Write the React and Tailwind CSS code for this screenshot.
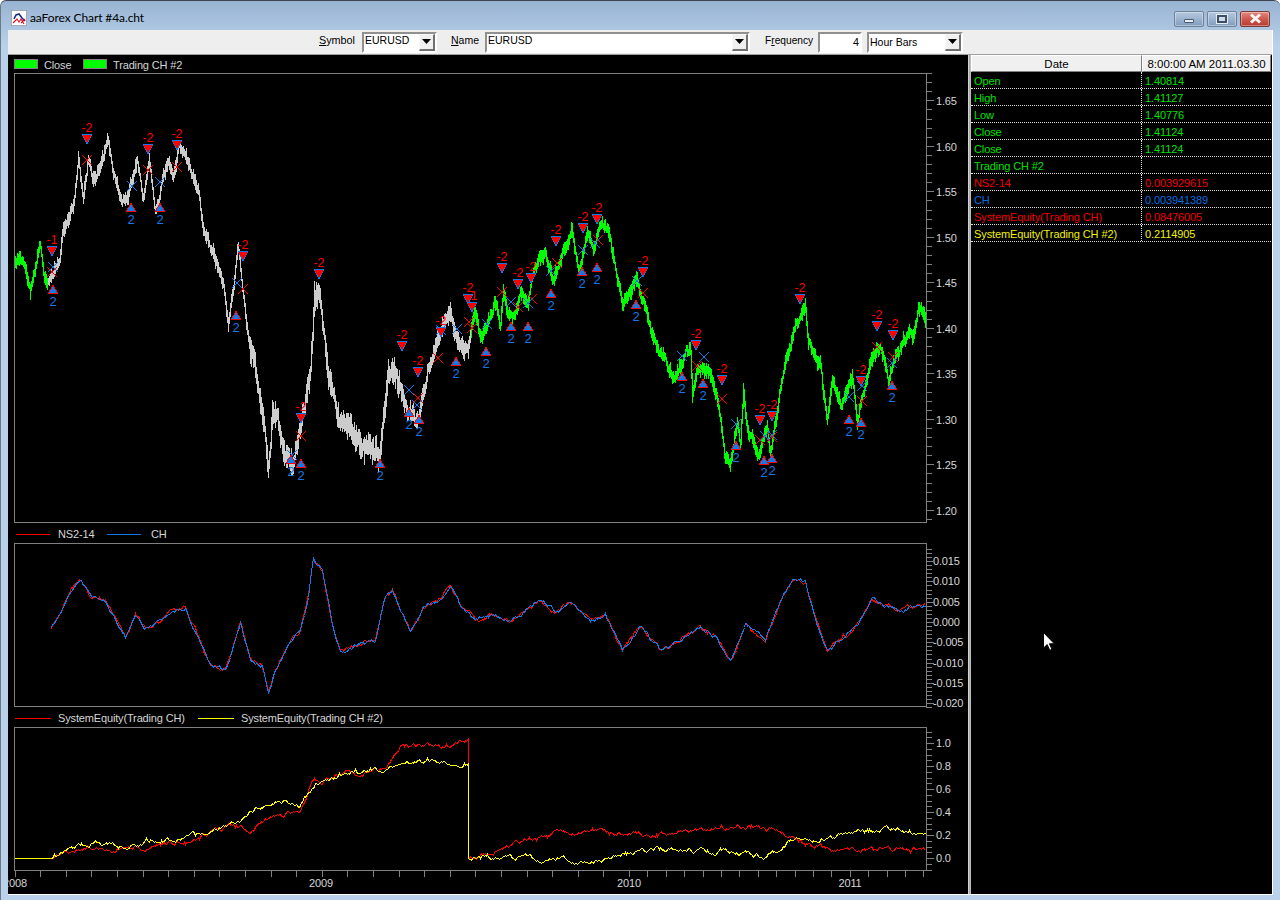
import React from "react";

function rng(seed) {
  let a = seed;
  return () => {
    a |= 0; a = (a + 0x6d2b79f5) | 0;
    let t = Math.imul(a ^ (a >>> 15), 1 | a);
    t = (t + Math.imul(t ^ (t >>> 7), 61 | t)) ^ t;
    return ((t ^ (t >>> 14)) >>> 0) / 4294967296;
  };
}
function interp(pts, x) {
  for (let i = 1; i < pts.length; i++) {
    if (x <= pts[i][0]) {
      const [a, b] = pts[i - 1], [c, d] = pts[i];
      return c === a ? d : b + ((d - b) * (x - a)) / (c - a);
    }
  }
  return pts[pts.length - 1][1];
}

const PRICE = [[14,262],[20,258],[25,268],[30,292],[35,265],[40,245],[44,275],[47,287],[53,273],[60,253],[63,227],[73,203],[78,157],[83,200],[88,160],[93,180],[108,147],[113,177],[122,203],[128,193],[137,163],[143,197],[149,163],[155,207],[168,157],[173,180],[179,147],[187,163],[198,193],[203,237],[213,253],[223,283],[228,327],[238,250],[247,327],[252,350],[262,400],[268,470],[272,420],[283,440],[292,465],[300,430],[310,380],[314,300],[320,300],[328,380],[340,420],[355,440],[372,458],[380,455],[388,370],[400,385],[410,410],[418,425],[428,370],[440,340],[450,300],[457,343],[463,347],[468,340],[475,317],[482,340],[495,303],[500,327],[503,290],[508,317],[515,320],[520,297],[528,307],[533,280],[545,253],[553,282],[562,250],[572,233],[578,263],[587,237],[593,253],[600,225],[607,228],[613,260],[623,307],[637,280],[645,300],[650,320],[658,350],[663,353],[675,377],[683,357],[690,348],[692,393],[697,368],[703,363],[712,380],[718,403],[725,457],[730,460],[737,420],[740,443],[743,390],[747,433],[757,455],[767,428],[770,450],[780,393],[790,347],[800,320],[805,305],[808,340],[820,367],[827,420],[832,383],[840,407],[852,382],[857,430],[863,390],[870,363],[880,347],[888,377],[903,340],[913,337],[918,308],[926,320]];

const CH = [[50,628],[60,612],[70,590],[80,580],[90,595],[105,600],[115,618],[125,635],[135,615],[145,628],[160,622],[170,610],[185,608],[195,630],[210,665],[225,670],[232,650],[240,622],[250,660],[262,665],[268,692],[275,670],[290,640],[300,630],[308,595],[313,558],[322,570],[332,625],[340,652],[355,645],[375,640],[385,595],[392,590],[400,610],[410,630],[425,605],[437,600],[450,585],[460,605],[475,620],[490,615],[510,620],[525,610],[540,600],[555,610],[570,603],[590,620],[605,615],[622,650],[640,625],[660,650],[680,640],[700,628],[715,635],[730,662],[745,625],[765,640],[780,600],[793,578],[805,582],[815,620],[827,652],[845,635],[860,620],[872,598],[885,605],[900,612],[915,605],[925,605]];

const YEL = [[14,858],[52,858],[70,848],[90,843],[120,845],[160,839],[200,835],[240,818],[260,805],[280,800],[300,803],[315,785],[340,775],[360,772],[385,768],[405,762],[425,760],[445,763],[468,763],[468.5,858],[500,857],[540,858],[590,860],[620,855],[660,848],[700,850],[740,852],[765,857],[790,842],[820,838],[850,832],[880,830],[900,828],[925,833]];
const RED = [[14,858],[52,858],[80,848],[110,848],[150,845],[190,842],[230,825],[250,830],[270,815],[300,810],[312,780],[340,775],[385,768],[400,747],[430,748],[445,745],[468,740],[468.5,858],[490,855],[510,843],[560,832],[600,830],[650,835],[700,830],[730,826],[770,828],[800,840],[830,848],[870,852],[900,849],[925,850]];

const SHORTS = [[52,251,"-1"],[87,139],[148,149],[177,145],[243,256],[319,274],[301,418],[402,346],[418,372],[441,332],[468,299],[472,307,"-1"],[502,268],[518,284],[531,278],[556,241],[583,228],[597,219],[643,272],[696,345],[722,380],[760,420],[772,416],[800,299],[861,381],[877,326],[893,335]];
const LONGS = [[53,290],[131,208],[160,208],[236,316],[291,460],[301,464],[380,464],[409,413],[419,420],[456,362],[486,352],[511,327],[528,327],[551,294],[582,272],[597,268],[636,305],[682,377],[703,384],[736,446],[764,461],[772,459],[849,420],[861,423],[892,386]];
const RX = [[52,272],[87,160],[148,170],[177,167],[243,289],[301,436],[418,398],[438,358],[469,322],[472,328],[502,292],[518,307],[532,299],[557,263],[583,250],[598,240],[643,293],[697,366],[722,399],[760,440],[772,437],[862,401],[877,347],[893,357]];
const BX = [[53,267],[132,186],[160,182],[237,283],[292,455],[409,390],[417,405],[441,330],[457,329],[487,324],[511,302],[528,303],[551,271],[583,250],[595,243],[637,281],[682,356],[704,357],[736,424],[765,436],[772,435],[849,397],[862,386],[892,363]];

function vol(x) {
  if (x >= 250 && x < 400) return 1.7;
  if (x >= 400 && x < 470) return 1.25;
  return 1;
}
function priceBars(from, to, seed) {
  const r = rng(seed);
  let d = "";
  let prev = null;
  let walk = 0;
  for (let x = from; x <= to; x++) {
    const v = vol(x);
    walk = walk * 0.8 + (r() - 0.5) * 7 * v;
    const c = interp(PRICE, x) + walk;
    const h = (3.5 + r() * 5) * v;
    let y1 = Math.round(c - h), y2 = Math.round(c + h * 0.9);
    if (prev !== null) { y1 = Math.min(y1, prev + 1); y2 = Math.max(y2, prev - 1); }
    d += `M${x + 0.5} ${y1}V${y2}`;
    prev = Math.round(c);
  }
  return d;
}
function noisyLine(pts, from, to, amp, seed) {
  const r = rng(seed);
  const out = [];
  let n = 0;
  for (let x = from; x <= to; x += 1) {
    n = n * 0.75 + (r() - 0.5) * amp;
    out.push(`${x + 0.5},${Math.round(interp(pts, x) + n) + 0.5}`);
  }
  return out.join(" ");
}
function equityLine(pts, seed, amp) {
  const r = rng(seed);
  const o = [];
  let n = 0;
  for (let x = 14; x <= 925; x++) {
    const base = interp(pts, x);
    if (x > 52) n = n * 0.8 + (r() - 0.5) * amp; else n = 0;
    o.push(`${x + 0.5},${Math.round(base + n) + 0.5}`);
    if (x === 468) o.push(`468.5,858.5`);
  }
  return o.join(" ");
}

const GRAY = "#808080";
const AXISTEXT = "#d6d6d6";

function Pane({ top, h, yTop, yBot, ticks, clip, children }) {
  return (
    <svg width="960" height={h} viewBox={`8 ${top} 960 ${h}`} shapeRendering="crispEdges" className={clip ? "block shrink-0" : "block shrink-0 overflow-visible"}>
      {children}
      <rect x="14.5" y={yTop + 0.5} width="912" height={yBot - yTop} fill="none" stroke={GRAY} />
      <path d={ticks} stroke={GRAY} fill="none" />
    </svg>
  );
}

function axisTicks(start, stepMinor, count, isMajor) {
  let d = "";
  for (let i = 0; i < count; i++) {
    const y = Math.round(start + stepMinor * i) + 0.5;
    d += `M926 ${y}H${isMajor(i) ? 934 : 932}`;
  }
  return d;
}

function AxisLabel({ x, y, children }) {
  return <text x={x} y={y + 4} fontSize="11" fill={AXISTEXT}>{children}</text>;
}

function Markers() {
  return (
    <g>
      {RX.map(([x, y], i) => (
        <path key={"r" + i} d={`M${x - 5} ${y - 5}L${x + 5} ${y + 5}M${x + 5} ${y - 5}L${x - 5} ${y + 5}`} stroke="#ff0000" />
      ))}
      {BX.map(([x, y], i) => (
        <path key={"b" + i} d={`M${x - 5} ${y - 5}L${x + 5} ${y + 5}M${x + 5} ${y - 5}L${x - 5} ${y + 5}`} stroke="#1478e6" />
      ))}
      {SHORTS.map(([x, y, t], i) => (
        <g key={"s" + i}>
          <path d={`M${x - 5.5} ${y - 5}H${x + 5.5}L${x} ${y + 5.5}Z`} fill="#1478e6" />
          <path d={`M${x - 4.5} ${y - 4}H${x + 4.5}L${x} ${y + 4}Z`} fill="#ff0000" />
          <text x={x} y={y - 7} fontSize="12.5" fill="#ff0000" textAnchor="middle">{t || "-2"}</text>
        </g>
      ))}
      {LONGS.map(([x, y], i) => (
        <g key={"l" + i}>
          <path d={`M${x} ${y - 6}L${x + 5.5} ${y + 4}H${x - 5.5}Z`} fill="#ff0000" />
          <path d={`M${x} ${y - 4}L${x + 4} ${y + 3}H${x - 4}Z`} fill="#1478e6" />
          <text x={x} y={y + 16} fontSize="13" fill="#1478e6" textAnchor="middle">2</text>
        </g>
      ))}
    </g>
  );
}

const dropArrow = (
  <svg width="9" height="5" viewBox="0 0 9 5"><path d="M0 0H9L4.5 5Z" fill="#000" /></svg>
);

function Combo({ w, text, up }) {
  return (
    <div className={`${w} h-[21px] flex items-center justify-between bg-white border-2 border-t-[#909090] border-l-[#909090] border-r-white border-b-white`}>
      <span className={`pl-[1px] text-[10.5px] leading-none text-black ${up ? "-mt-[3px]" : ""}`}>{text}</span>
      <div className="w-[16px] h-[17px] flex items-center justify-center bg-[#f0f0f0] border border-t-[#f8f8f8] border-l-[#f8f8f8] border-r-2 border-b-2 border-r-[#707070] border-b-[#707070]">
        {dropArrow}
      </div>
    </div>
  );
}

function Swatch() {
  return <div className="w-[24px] h-[10px] shrink-0 bg-[#00ff00] border border-[#808080]" />;
}

function LineKey({ color, w }) {
  return <div className={`${w} h-[1px] shrink-0 ${color}`} />;
}

const ROWS = [
  ["Open", "1.40814", "text-[#00e000]"],
  ["High", "1.41127", "text-[#00e000]"],
  ["Low", "1.40776", "text-[#00e000]"],
  ["Close", "1.41124", "text-[#00e000]"],
  ["Close", "1.41124", "text-[#00e000]"],
  ["Trading CH #2", "", "text-[#00e000]"],
  ["NS2-14", "0.003929615", "text-[#f00000]"],
  ["CH", "0.003941389", "text-[#0a6ee0]"],
  ["SystemEquity(Trading CH)", "0.08476005", "text-[#f00000]"],
  ["SystemEquity(Trading CH #2)", "0.2114905", "text-[#f0f000]"],
];

function WinBtn({ red, children }) {
  return (
    <div className={`w-[30px] h-[16px] rounded-[2px] flex items-center justify-center border ${red ? "border-[#7a3a36] bg-gradient-to-b from-[#e08c82] via-[#cc5a4e] to-[#b83a30]" : "border-[#6f8199] bg-gradient-to-b from-[#b5c8de] via-[#9db4cf] to-[#7f9cbd]"} shadow-[inset_0_0_0_1px_rgba(255,255,255,0.35)]`}>
      {children}
    </div>
  );
}

export default function App() {
  const priceTicks = axisTicks(73, 9.1, 50, (i) => i % 5 === 3);
  const chTicks = axisTicks(548.9, 4.06, 40, (i) => (i - 3) % 5 === 0 && i >= 3);
  const eqTicks = axisTicks(731.5, 5.75, 25, (i) => i % 4 === 2);
  let timeTicks = "";
  for (let x = 14.5; x < 629; x += 25.6) timeTicks += `M${Math.round(x) + 0.5} 870V877`;
  for (let x = 629; x < 926; x += 18.4) timeTicks += `M${Math.round(x) + 0.5} 870V877`;

  return (
    <div className="w-[1280px] h-[900px] bg-white overflow-hidden font-['Liberation_Sans',sans-serif]">
      <div className="relative w-full h-full flex flex-col rounded-t-[6px] border-t border-l border-t-[#3c4650] border-l-[#6c7a88] bg-gradient-to-b from-[#98b3d2] from-0% to-[#b9d1ea] to-[5%]">
        {/* title bar */}
        <div className="h-[29px] shrink-0 flex items-center pl-[10px] pr-[10px]">
          <svg width="16" height="16" viewBox="0 0 16 16" className="shrink-0 mt-[4px]">
            <rect x="0.5" y="0.5" width="15" height="15" fill="#fff" stroke="#777" strokeDasharray="1 1" />
            <path d="M3 9L5 5L8 4L11 8L14 11" stroke="#1a2a90" strokeWidth="1.6" fill="none" />
            <path d="M2 13L6 9L8 12L10 9L13 14M10 13L14 9" stroke="#e01020" strokeWidth="1.1" fill="none" />
          </svg>
          <span className="ml-[3px] mt-[5px] text-[12px] tracking-[-0.1px] text-black font-['Lato',sans-serif]">aaForex Chart #4a.cht</span>
          <div className="ml-auto flex gap-[3px] mt-[6px]">
            <WinBtn>
              <div className="w-[10px] h-[4px] bg-[#e8eef5] border border-[#4a5a70] rounded-[1px] mt-[5px]" />
            </WinBtn>
            <WinBtn>
              <div className="w-[10px] h-[8px] bg-[#cfdcea] border-2 border-[#3f4f66] outline outline-1 outline-[#e4ebf3]" />
            </WinBtn>
            <WinBtn red>
              <svg width="13" height="11" viewBox="0 0 13 11">
                <path d="M2 1.5L11 9.5M11 1.5L2 9.5" stroke="#f4f4f4" strokeWidth="3" />
              </svg>
            </WinBtn>
          </div>
        </div>

        {/* client */}
        <div className="ml-[7px] mr-[7px] w-[1265px] h-[865px] flex flex-col bg-[#eeeeee] border-b border-r border-white">
          <div className="h-[24px] shrink-0 flex items-center justify-center pl-[2px] text-[10.8px] text-black">
            <span className="w-[36px] -mt-[3px] whitespace-nowrap"><span className="underline">S</span>ymbol</span>
            <div className="ml-[7px]"><Combo w="w-[75px]" text="EURUSD" up /></div>
            <span className="ml-[14px] w-[28px] -mt-[2px] whitespace-nowrap text-[10.5px]"><span className="underline">N</span>ame</span>
            <div className="ml-[6px]"><Combo w="w-[265px]" text="EURUSD" up /></div>
            <span className="ml-[15px] w-[48px] -mt-[2px] whitespace-nowrap text-[10.2px]">F<span className="underline">r</span>equency</span>
            <div className="ml-[5px] w-[44px] h-[21px] flex items-center justify-end pr-[1px] bg-white border-2 border-t-[#909090] border-l-[#909090] border-r-white border-b-white">4</div>
            <div className="ml-[5px]"><Combo w="w-[96px]" text="Hour Bars" /></div>
          </div>

          <div className="flex-1 min-h-0 flex border-t border-[#a0a0a0]">
            {/* charts */}
            <div className="w-[960px] h-full shrink-0 bg-black flex flex-col text-[11px] tracking-[-0.15px] text-[#d6d6d6]">
              <div className="h-[18px] shrink-0 flex items-center pl-[6px] leading-[20px]">
                <Swatch />
                <span className="ml-[6px] w-[39px] h-[18px]">Close</span>
                <Swatch />
                <span className="ml-[6px] h-[18px]">Trading CH #2</span>
              </div>
              <Pane top={73} h={450} yTop={73} yBot={522} ticks={priceTicks}>
                <path d={priceBars(14, 47, 11)} stroke="#00ff00" fill="none" />
                <path d={priceBars(48, 470, 23)} stroke="#cccccc" fill="none" />
                <path d={priceBars(471, 925, 37)} stroke="#00ff00" fill="none" />
                <Markers />
                {["1.65","1.60","1.55","1.50","1.45","1.40","1.35","1.30","1.25","1.20"].map((t, i) => (
                  <AxisLabel key={t} x={936} y={101 + i * 45.5}>{t}</AxisLabel>
                ))}
              </Pane>

              <div className="h-[20px] shrink-0 flex items-center pt-[3px] pl-[8px]">
                <LineKey color="bg-[#ff0000]" w="w-[34px]" />
                <span className="ml-[8px] w-[49px]">NS2-14</span>
                <LineKey color="bg-[#1478e6]" w="w-[34px]" />
                <span className="ml-[10px]">CH</span>
              </div>
              <Pane top={543} h={164} yTop={543} yBot={706} ticks={chTicks}>
                <polyline points={noisyLine(CH, 50, 925, 3.4, 5)} fill="none" stroke="#ff0000" />
                <polyline points={noisyLine(CH, 50, 925, 3, 9)} fill="none" stroke="#1478e6" />
                {["0.015","0.010","0.005","0.000","-0.005","-0.010","-0.015","-0.020"].map((t, i) => (
                  <AxisLabel key={t} x={933} y={561 + i * 20.3}>{t}</AxisLabel>
                ))}
              </Pane>

              <div className="h-[20px] shrink-0 flex items-center pt-[3px] pl-[7px]">
                <LineKey color="bg-[#ff0000]" w="w-[36px]" />
                <span className="ml-[7px] w-[140px] whitespace-nowrap">SystemEquity(Trading CH)</span>
                <LineKey color="bg-[#ffff00]" w="w-[36px]" />
                <span className="ml-[7px] whitespace-nowrap">SystemEquity(Trading CH #2)</span>
              </div>
              <Pane top={727} h={166} yTop={727} yBot={870} ticks={eqTicks} clip>
                <polyline points={equityLine(RED, 3, 3.5)} fill="none" stroke="#ff0000" />
                <polyline points={equityLine(YEL, 7, 3.5)} fill="none" stroke="#ffff00" />
                <path d={timeTicks} stroke={GRAY} fill="none" />
                {[["2008", 15], ["2009", 321], ["2010", 629], ["2011", 850]].map(([t, x]) => (
                  <text key={t} x={x} y={887} fontSize="11" fill={AXISTEXT} textAnchor="middle">{t}</text>
                ))}
                {["1.0","0.8","0.6","0.4","0.2","0.0"].map((t, i) => (
                  <AxisLabel key={t} x={936} y={743 + i * 23}>{t}</AxisLabel>
                ))}
              </Pane>
            </div>

            {/* splitter */}
            <div className="w-[3px] shrink-0 bg-gradient-to-r from-[#e8e8e8] via-[#a8a8a8] to-[#c8c8c8]" />

            {/* data table */}
            <div className="relative w-[301px] shrink-0 bg-black text-[11px] tracking-[-0.1px]">
              <div className="flex h-[17px] text-[11.5px] tracking-normal">
                <div className="w-[171px] shrink-0 flex items-center justify-center pt-[3px] bg-[#f0f0f0] text-black border border-t-white border-l-white border-r-[#808080] border-b-[#808080]">Date</div>
                <div className="w-[129px] flex items-center justify-center pt-[3px] bg-[#f0f0f0] text-black border border-t-white border-l-white border-r-[#808080] border-b-[#808080]">8:00:00 AM 2011.03.30</div>
              </div>
              {ROWS.map(([k, v, c], i) => (
                <div key={i} className={`flex h-[17px] w-[300px] border-b border-dotted border-[#e0e0e0] ${c}`}>
                  <div className="w-[171px] shrink-0 pl-[3px] pt-[1px] leading-[17px] whitespace-nowrap border-r border-dotted border-[#e0e0e0]">{k}</div>
                  <div className="flex-1 pl-[3px] pt-[1px] leading-[17px]">{v}</div>
                </div>
              ))}
              <svg width="12" height="19" viewBox="0 0 12 19" className="absolute left-[72px] top-[577px]">
                <path d="M0.5 0.5V16L4.2 12.6L6.8 18.3L9 17.3L6.4 11.8H11.4Z" fill="#fff" stroke="#000" />
              </svg>
            </div>
          </div>
        </div>
      </div>
    </div>
  );
}
